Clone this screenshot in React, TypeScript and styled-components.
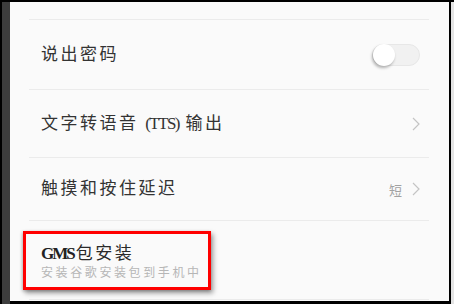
import React from "react";
import styled, { createGlobalStyle } from "styled-components";

const Global = createGlobalStyle`
  html, body { margin: 0; padding: 0; background: #000; }
  body { width: 454px; height: 304px; overflow: hidden; }
  * { box-sizing: border-box; }
`;

const Frame = styled.div`
  width: 454px;
  height: 304px;
  display: flex;
  align-items: flex-start;
  background: #000;
  padding: 2px 0 0 2px;
`;

const SideBar = styled.div`
  width: 8px;
  height: 302px;
  background: #3d3d3d;
  flex-shrink: 0;
`;

const Screen = styled.div`
  width: 439px;
  height: 299px;
  background: #fafafa;
  overflow: hidden;
  flex-shrink: 0;
  padding: 17px 0 0 19px;
`;

const RightEdge = styled.div`
  margin-left: 2px;
  width: 3px;
  height: 302px;
  background: #e4e4e4;
  flex-shrink: 0;
`;

const List = styled.div`
  width: 400px;
  display: flex;
  flex-direction: column;
  font-family: "Liberation Serif", "Noto Sans CJK SC", serif;
`;

const Row = styled.div<{ $h: number; $stack?: boolean }>`
  position: relative;
  height: ${(p) => p.$h}px;
  border-top: 1px solid #ebebeb;
  padding: ${(p) => (p.$stack ? "23px 9px 0 12px" : "0 9px 0 12px")};
  display: flex;
  flex-direction: ${(p) => (p.$stack ? "column" : "row")};
  align-items: ${(p) => (p.$stack ? "flex-start" : "center")};
  justify-content: ${(p) => (p.$stack ? "flex-start" : "space-between")};
  flex-shrink: 0;
`;

const Title = styled.div`
  font-size: 17px;
  letter-spacing: 2.5px;
  color: #333;
  line-height: 20px;
  white-space: nowrap;
`;

const Latin = styled.span<{ $bold?: boolean }>`
  font-family: "Liberation Serif", serif;
  font-size: 17px;
  font-weight: ${(p) => (p.$bold ? 700 : 400)};
  letter-spacing: ${(p) => (p.$bold ? "-2px" : "-1.6px")};
  color: ${(p) => (p.$bold ? "#222" : "#333")};
  margin-right: ${(p) => (p.$bold ? "2px" : "0")};
`;

const BoldTitle = styled(Title)`
  color: #2a2a2a;
`;

const Subtitle = styled.div`
  margin-top: 1px;
  font-size: 12px;
  letter-spacing: 2.6px;
  line-height: 16px;
  color: #b6b6b6;
  white-space: nowrap;
`;

const Trailing = styled.div`
  display: flex;
  align-items: center;
  gap: 10px;
`;

const Value = styled.span`
  font-size: 13px;
  color: #a2a2a2;
`;

const Track = styled.div`
  position: relative;
  width: 48px;
  height: 22px;
  border-radius: 11px;
  background: #f1f1f1;
  border: 1px solid #e7e7e7;
  margin-top: 1px;
`;

const Knob = styled.div`
  position: absolute;
  left: 0px;
  top: -1px;
  width: 22px;
  height: 22px;
  border-radius: 50%;
  background: #fff;
  box-shadow: -1px 2px 3px rgba(0, 0, 0, 0.3);
`;

const Highlight = styled.div`
  position: absolute;
  left: -6px;
  top: 10px;
  width: 188px;
  height: 59px;
  border: 3px solid #ff0000;
  box-shadow: 2px 3px 5px rgba(0, 0, 0, 0.4), -1px 1px 3px rgba(0, 0, 0, 0.2);
  pointer-events: none;
`;

const Chevron = () => (
  <svg width="8" height="14" viewBox="0 0 8 14">
    <path d="M1 1 L7 7 L1 13" fill="none" stroke="#c4c4c4" strokeWidth="1.2" />
  </svg>
);

export default function App() {
  return (
    <>
      <Global />
      <Frame>
        <SideBar />
        <Screen>
          <List>
            <Row $h={70}>
              <Title>说出密码</Title>
              <Track>
                <Knob />
              </Track>
            </Row>
            <Row $h={68}>
              <Title>
                文字转语音 <Latin>(TTS)</Latin> 输出
              </Title>
              <Trailing>
                <Chevron />
              </Trailing>
            </Row>
            <Row $h={63}>
              <Title>触摸和按住延迟</Title>
              <Trailing>
                <Value>短</Value>
                <Chevron />
              </Trailing>
            </Row>
            <Row $h={79} $stack>
              <BoldTitle>
                <Latin $bold>GMS</Latin>包安装
              </BoldTitle>
              <Subtitle>安装谷歌安装包到手机中</Subtitle>
              <Highlight />
            </Row>
            <Row $h={10} />
          </List>
        </Screen>
        <RightEdge />
      </Frame>
    </>
  );
}
